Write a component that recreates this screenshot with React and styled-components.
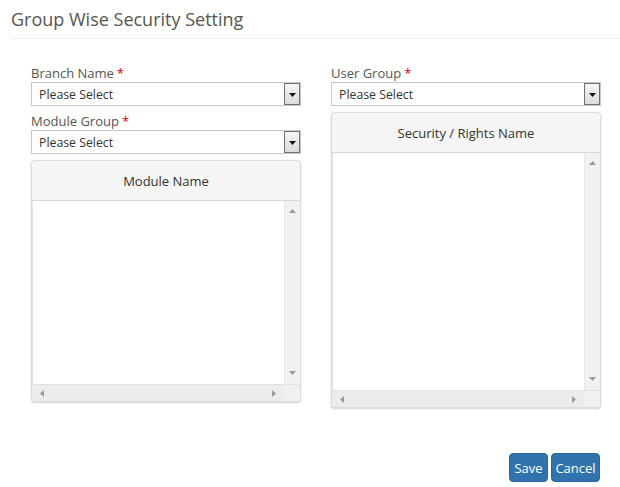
import styled, { createGlobalStyle } from "styled-components";

const GlobalStyle = createGlobalStyle`
    body {
        margin: 0;
        background: #fff;
        font-family: "Open Sans", "Liberation Sans", sans-serif;
        color: #555;
    }
`;

const Page = styled.div`
    width: 620px;
    height: 487px;
    display: flex;
    flex-direction: column;
    overflow: hidden;
`;

const Title = styled.h1`
    margin: 0 0 0 11px;
    padding: 7px 0 6px;
    font-size: 18px;
    line-height: 25px;
    font-weight: 400;
    color: #555;
    border-bottom: 1px solid #eee;
`;

const Columns = styled.div`
    display: grid;
    grid-template-columns: 270px 270px;
    column-gap: 30px;
    padding: 25px 0 0 31px;
    align-items: start;
`;

const Column = styled.div`
    display: flex;
    flex-direction: column;
`;

const Field = styled.div`
    display: flex;
    flex-direction: column;
    margin-bottom: 6px;
`;

const Label = styled.label`
    font-size: 13px;
    line-height: 18px;
    color: #555;
`;

const Required = styled.span`
    color: #d00;
    margin-left: 3px;
`;

const SelectBox = styled.div`
    height: 24px;
    box-sizing: border-box;
    border: 1px solid #c8c8c8;
    background: #fff;
    display: flex;
    align-items: center;
    justify-content: space-between;
    padding: 1px 0 0 7px;
    font-size: 12.3px;
    color: #333;
`;

const DropButton = styled.span`
    width: 16px;
    height: 22px;
    margin-top: -1px;
    box-sizing: border-box;
    border: 1px solid #707070;
    background: linear-gradient(#f4f4f4, #dcdcdc);
    display: flex;
    align-items: center;
    justify-content: center;
`;

const Panel = styled.div`
    border: 1px solid #dcdcdc;
    border-radius: 4px;
    background: #f5f5f5;
    box-shadow: 0 1px 2px rgba(0, 0, 0, 0.18);
    overflow: hidden;
`;

const PanelHeader = styled.div`
    height: 39px;
    display: flex;
    align-items: center;
    justify-content: center;
    font-size: 13px;
    color: #333;
    border-bottom: 1px solid #d8d8d8;
`;

const PanelBody = styled.div`
    height: ${(p) => p.$h}px;
    display: grid;
    grid-template-columns: 1fr 16px;
    grid-template-rows: 1fr 17px;
    background: #fff;
`;

const ListArea = styled.div`
    background: #fff;
    border-left: 1px solid #e4e4e4;
`;

const VScroll = styled.div`
    background: #f1f1f1;
    border-left: 1px solid #e6e6e6;
    display: flex;
    flex-direction: column;
    justify-content: space-between;
    align-items: center;
    padding: 6px 0 8px;
`;

const HScroll = styled.div`
    background: #ececec;
    border-top: 1px solid #e2e2e2;
    display: flex;
    align-items: center;
    justify-content: space-between;
    padding: 0 7px 0 7px;
`;

const Corner = styled.div`
    background: #f1f1f1;
    border-top: 1px solid #e2e2e2;
`;

const Footer = styled.div`
    display: flex;
    justify-content: flex-end;
    gap: 3px;
    padding: 45px 20px 0 0;
`;

const Button = styled.button`
    height: 29px;
    width: ${(p) => p.$w}px;
    padding: 0;
    border: 1px solid #2b679c;
    border-radius: 4px;
    background: #3174ad;
    color: #fff;
    font-family: "Open Sans", "Liberation Sans", sans-serif;
    font-size: 13px;
`;

const Arrow = ({ dir, color = "#999", size = 7 }) => {
    const pts = {
        up: "0,6 3.5,2 7,6",
        down: "0,2 3.5,6 7,2",
        left: "5,0 1,3.5 5,7",
        right: "2,0 6,3.5 2,7",
    }[dir];
    return (
        <svg width={size} height={size} viewBox="0 0 7 7">
            <polygon points={pts} fill={color} />
        </svg>
    );
};

function Select() {
    return (
        <SelectBox>
            Please Select
            <DropButton>
                <Arrow dir="down" color="#111" />
            </DropButton>
        </SelectBox>
    );
}

function ListPanel({ title, height }) {
    return (
        <Panel>
            <PanelHeader>{title}</PanelHeader>
            <PanelBody $h={height}>
                <ListArea />
                <VScroll>
                    <Arrow dir="up" />
                    <Arrow dir="down" />
                </VScroll>
                <HScroll>
                    <Arrow dir="left" />
                    <Arrow dir="right" />
                </HScroll>
                <Corner />
            </PanelBody>
        </Panel>
    );
}

export default function App() {
    return (
        <>
            <GlobalStyle />
            <Page>
                <Title>Group Wise Security Setting</Title>
                <Columns>
                    <Column>
                        <Field>
                            <Label>
                                Branch Name<Required>*</Required>
                            </Label>
                            <Select />
                        </Field>
                        <Field>
                            <Label>
                                Module Group<Required>*</Required>
                            </Label>
                            <Select />
                        </Field>
                        <ListPanel title="Module Name" height={200} />
                    </Column>
                    <Column>
                        <Field>
                            <Label>
                                User Group<Required>*</Required>
                            </Label>
                            <Select />
                        </Field>
                        <ListPanel title="Security / Rights Name" height={254} />
                    </Column>
                </Columns>
                <Footer>
                    <Button $w={39}>Save</Button>
                    <Button $w={49}>Cancel</Button>
                </Footer>
            </Page>
        </>
    );
}
